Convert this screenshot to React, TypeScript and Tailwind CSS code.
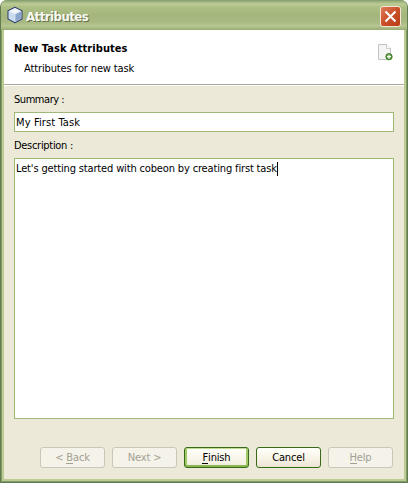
import React from "react";

function CubeIcon() {
  return (
    <svg width="16" height="18" viewBox="0 0 16 18" className="shrink-0">
      <path d="M8 1.3 15 4.7v8.4L8 16.7 1 13.1V4.7Z" fill="#dce7f2" stroke="#34466e" strokeWidth="1.1" strokeLinejoin="round" />
      <path d="M8 2.2 13.6 5 8 7.6 2.4 5Z" fill="#f3f7fa" />
      <path d="M2 5.6 7.6 8.2v7.3L2 12.6Z" fill="#c9dbee" />
      <path d="M14 5.6 8.4 8.2v7.3l5.6-2.9Z" fill="#8ba5cc" />
    </svg>
  );
}

function NewPageIcon() {
  return (
    <svg width="16" height="17" viewBox="0 0 16 17" className="shrink-0">
      <path d="M1.5.5h8l4 4v11h-12Z" fill="#f5f5f5" stroke="#c2c2c2" />
      <path d="M9.5.5v4h4" fill="#fff" stroke="#cdcdcd" />
      <circle cx="12" cy="12.7" r="3.2" fill="#5b9b3e" stroke="#4a8233" />
      <path d="M10 12.7h4M12 10.7v4" stroke="#fff" strokeWidth="1.2" />
    </svg>
  );
}

function WizardButton({ variant, children }: { variant: "disabled" | "default" | "normal"; children: React.ReactNode }) {
  const styles = {
    disabled: "border-[#c9c7ba] bg-[#f5f2ea] text-[#a1a192]",
    default: "border-[#376a16] bg-linear-to-b from-[#fffffb] to-[#f2eddd] text-black shadow-[inset_0_1px_#bfdd90,inset_0_-2px_#8cb64f,inset_2px_0_#a0c968,inset_-2px_0_#a0c968]",
    normal: "border-[#376a16] bg-linear-to-b from-[#fffffb] via-[#f8f5e8] to-[#eee4d6] text-black",
  };
  return (
    <button disabled={variant === "disabled"} className={`flex h-[21px] w-[65px] items-center justify-center rounded-[3px] border tracking-[-0.15px] whitespace-nowrap ${styles[variant]}`}>
      <span>{children}</span>
    </button>
  );
}

function Mnemonic({ children }: { children: string }) {
  return <span className="inline-block h-[12px] border-b border-current leading-[11px]">{children}</span>;
}

export default function App() {
  return (
    <div className="h-[483px] w-[408px] bg-white">
      <div className="flex h-full flex-col overflow-hidden rounded-t-[7px] border-x border-b border-[#617c4f] bg-[#aaba80] font-['DejaVu_Sans_Condensed','DejaVu_Sans',sans-serif] text-[11px] leading-[14px] [font-stretch:condensed]">
        <header className="flex h-[30px] shrink-0 items-center bg-[linear-gradient(#80996b_0px,#a3b781_2px,#bdcc96_4px,#aebf86_7px,#a5b67d_15px,#a8b981_22px,#b8c693_26px,#97ab74_30px)] px-[6px]">
          <CubeIcon />
          <h1 className="mt-[4px] ml-[3px] flex-1 text-[13px] font-bold tracking-[-0.5px] text-[#f8f9f2] [text-shadow:1px_1px_#65704b]">Attributes</h1>
          <button aria-label="Close" className="mt-[2px] flex size-[21px] items-center justify-center rounded-[3px] border border-[#f4e4d5] bg-linear-to-br from-[#dc7a58] via-[#c95027] to-[#b93b18]">
            <svg width="13" height="13" viewBox="0 0 13 13">
              <path d="m1.5 1.5 10 10m0-10-10 10" stroke="#fff" strokeWidth="2.1" />
            </svg>
          </button>
        </header>
        <div className="flex min-h-0 flex-1 flex-col border-x border-b border-[#809b67]">
          <div className="flex min-h-0 flex-1 flex-col border-x-2 border-b-2 border-[#bccb90] bg-[#ece9d8]">
            <section className="flex h-[55px] shrink-0 items-start justify-between border-b border-[#aca899] bg-white pt-[12px] pr-[11px] pl-[10px]">
              <div>
                <h2 className="font-bold tracking-[0.06px]">New Task Attributes</h2>
                <p className="mt-[6px] pl-[10px] tracking-[-0.13px]">Attributes for new task</p>
              </div>
              <div className="mt-[2px]"><NewPageIcon /></div>
            </section>
            <main className="flex flex-col border-t border-white px-[10px] pt-[7px]">
              <label className="tracking-[-0.45px]">Summary :</label>
              <div className="mt-[5px] h-[20px] border border-[#9fb877] bg-white px-px pt-[3px] tracking-[0.12px]">My First Task</div>
              <label className="mt-[7px] tracking-[-0.3px]">Description :</label>
              <div className="mt-[5px] flex h-[261px] items-start border border-[#9fb877] bg-white px-px pt-[3px]">
                <span className="tracking-[-0.15px] whitespace-nowrap">Let's getting started with cobeon by creating first task</span>
                <i className="h-[14px] w-px bg-black" />
              </div>
              <div className="mt-[28px] flex justify-end gap-[7px] pr-px">
                <WizardButton variant="disabled">&lt; <Mnemonic>B</Mnemonic>ack</WizardButton>
                <WizardButton variant="disabled">Next &gt;</WizardButton>
                <WizardButton variant="default"><Mnemonic>F</Mnemonic>inish</WizardButton>
                <WizardButton variant="normal">Cancel</WizardButton>
                <WizardButton variant="disabled"><Mnemonic>H</Mnemonic>elp</WizardButton>
              </div>
            </main>
          </div>
        </div>
      </div>
    </div>
  );
}
